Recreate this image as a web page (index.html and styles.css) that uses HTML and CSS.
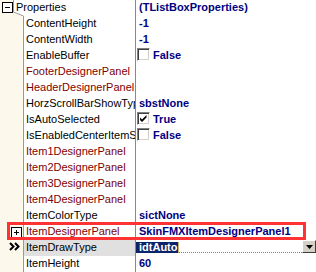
FILE: index.html
```html
<!DOCTYPE html>
<html lang="en">
<head>
    <meta charset="UTF-8">
    <title>Object Inspector</title>
    <link rel="stylesheet" href="styles.css">
</head>
<body>
    <div class="inspector">
        <div class="row head">
            <svg class="tree" width="24" height="16" viewBox="0 0 24 16">
                <polygon points="0,0 13.5,0 13.5,12 23.5,16 0,16" fill="#fcf8ec"/>
                <path d="M13.5 0V12L23.5 16" stroke="#999" fill="none"/>
                <rect x="2.5" y="2.5" width="10" height="10" fill="#fff" stroke="#000"/>
                <path d="M5 7.5H10" stroke="#000"/>
            </svg>
            <div class="name">Properties</div>
            <div class="value">(TListBoxProperties)</div>
        </div>
        <div class="row"><div class="gutter"></div><div class="name">ContentHeight</div><div class="value">-1</div></div>
        <div class="row"><div class="gutter"></div><div class="name">ContentWidth</div><div class="value">-1</div></div>
        <div class="row"><div class="gutter"></div><div class="name">EnableBuffer</div><div class="value"><span class="check"></span>False</div></div>
        <div class="row"><div class="gutter"></div><div class="name link">FooterDesignerPanel</div><div class="value"></div></div>
        <div class="row"><div class="gutter"></div><div class="name link">HeaderDesignerPanel</div><div class="value"></div></div>
        <div class="row"><div class="gutter"></div><div class="name">HorzScrollBarShowType</div><div class="value">sbstNone</div></div>
        <div class="row"><div class="gutter"></div><div class="name">IsAutoSelected</div><div class="value"><span class="check"><svg width="11" height="11" viewBox="0 0 11 11"><path d="M2 4.5L4 6.5L8.5 2V4.5L4 9L2 7Z" fill="#000"/></svg></span>True</div></div>
        <div class="row"><div class="gutter"></div><div class="name">IsEnabledCenterItemSelect</div><div class="value"><span class="check"></span>False</div></div>
        <div class="row"><div class="gutter"></div><div class="name link">Item1DesignerPanel</div><div class="value"></div></div>
        <div class="row"><div class="gutter"></div><div class="name link">Item2DesignerPanel</div><div class="value"></div></div>
        <div class="row"><div class="gutter"></div><div class="name link">Item3DesignerPanel</div><div class="value"></div></div>
        <div class="row"><div class="gutter"></div><div class="name link">Item4DesignerPanel</div><div class="value"></div></div>
        <div class="row"><div class="gutter"></div><div class="name">ItemColorType</div><div class="value">sictNone</div></div>
        <div class="row">
            <div class="gutter">
                <svg width="23" height="16" viewBox="0 0 23 16">
                    <rect x="11.5" y="3.5" width="10" height="10" fill="#fff" stroke="#000"/>
                    <path d="M14 8.5H19M16.5 6V11" stroke="#000"/>
                </svg>
            </div>
            <div class="name link">ItemDesignerPanel</div>
            <div class="value">SkinFMXItemDesignerPanel1</div>
        </div>
        <div class="row current">
            <div class="gutter">
                <svg width="23" height="16" viewBox="0 0 23 16">
                    <path d="M10 3L13.5 6.5L10 10M15 3L18.5 6.5L15 10" stroke="#000" stroke-width="2" fill="none"/>
                </svg>
            </div>
            <div class="name">ItemDrawType</div>
            <div class="value editor">
                <span class="sel">idtAuto</span>
                <span class="fill"></span>
                <span class="drop">
                    <svg width="7" height="4" viewBox="0 0 7 4"><path d="M0 0H7L3.5 4Z" fill="#000"/></svg>
                </span>
            </div>
        </div>
        <div class="row"><div class="gutter"></div><div class="name">ItemHeight</div><div class="value">60</div></div>
    </div>
    <div class="mark"></div>
</body>
</html>
```

FILE: styles.css
```css
body {
    margin: 0;
    background-color: #fff;
    font-family: "Liberation Sans", Arial, sans-serif;
    font-size: 11px;
}
.inspector {
    width: 316px;
    height: 272px;
    overflow: hidden;
}
.row {
    display: flex;
    height: 16px;
    line-height: 14px;
    white-space: nowrap;
}
.gutter {
    flex: none;
    width: 23px;
    border-right: 1px solid #999;
    background-color: #fcf8ec;
}
.gutter svg {
    display: block;
}
.tree {
    flex: none;
    display: block;
    margin-right: -10px;
}
.name {
    flex: none;
    width: 109px;
    padding-left: 2px;
    border-right: 1px solid #888;
    overflow: hidden;
    color: #000;
}
.head .name {
    width: 119px;
}
.name.link {
    color: #800000;
}
.current .name {
    background-color: #e0e0e0;
}
.value {
    flex: 1;
    display: flex;
    align-items: flex-start;
    padding-left: 3px;
    font-weight: bold;
    color: #000080;
    overflow: hidden;
}
.check {
    flex: none;
    box-sizing: border-box;
    width: 13px;
    height: 13px;
    margin: 0 3px 0 -2px;
    background-color: #fff;
    border: 1px solid;
    border-color: #808080 #fff #fff #808080;
    box-shadow: inset 1px 1px #404040, inset -1px -1px #d4d0c8;
}
.check svg {
    display: block;
}
.editor {
    padding-left: 0;
}
.sel {
    margin-top: 2px;
    height: 11px;
    line-height: 11px;
    padding: 0 1px 0 3px;
    background-color: #0a246a;
    color: #fff;
    border-right: 1px solid #c8b078;
}
.fill {
    flex: 1;
    height: 12px;
    border-bottom: 1px dotted #808080;
}
.drop {
    flex: none;
    box-sizing: border-box;
    width: 14px;
    height: 13px;
    display: flex;
    align-items: center;
    justify-content: center;
    background-color: #d4d0c8;
    border: 1px solid;
    border-color: #fff #404040 #404040 #fff;
}
.mark {
    position: absolute;
    left: 7px;
    top: 222px;
    width: 299px;
    height: 18px;
    box-sizing: border-box;
    border: 3px solid #f33;
}
```
